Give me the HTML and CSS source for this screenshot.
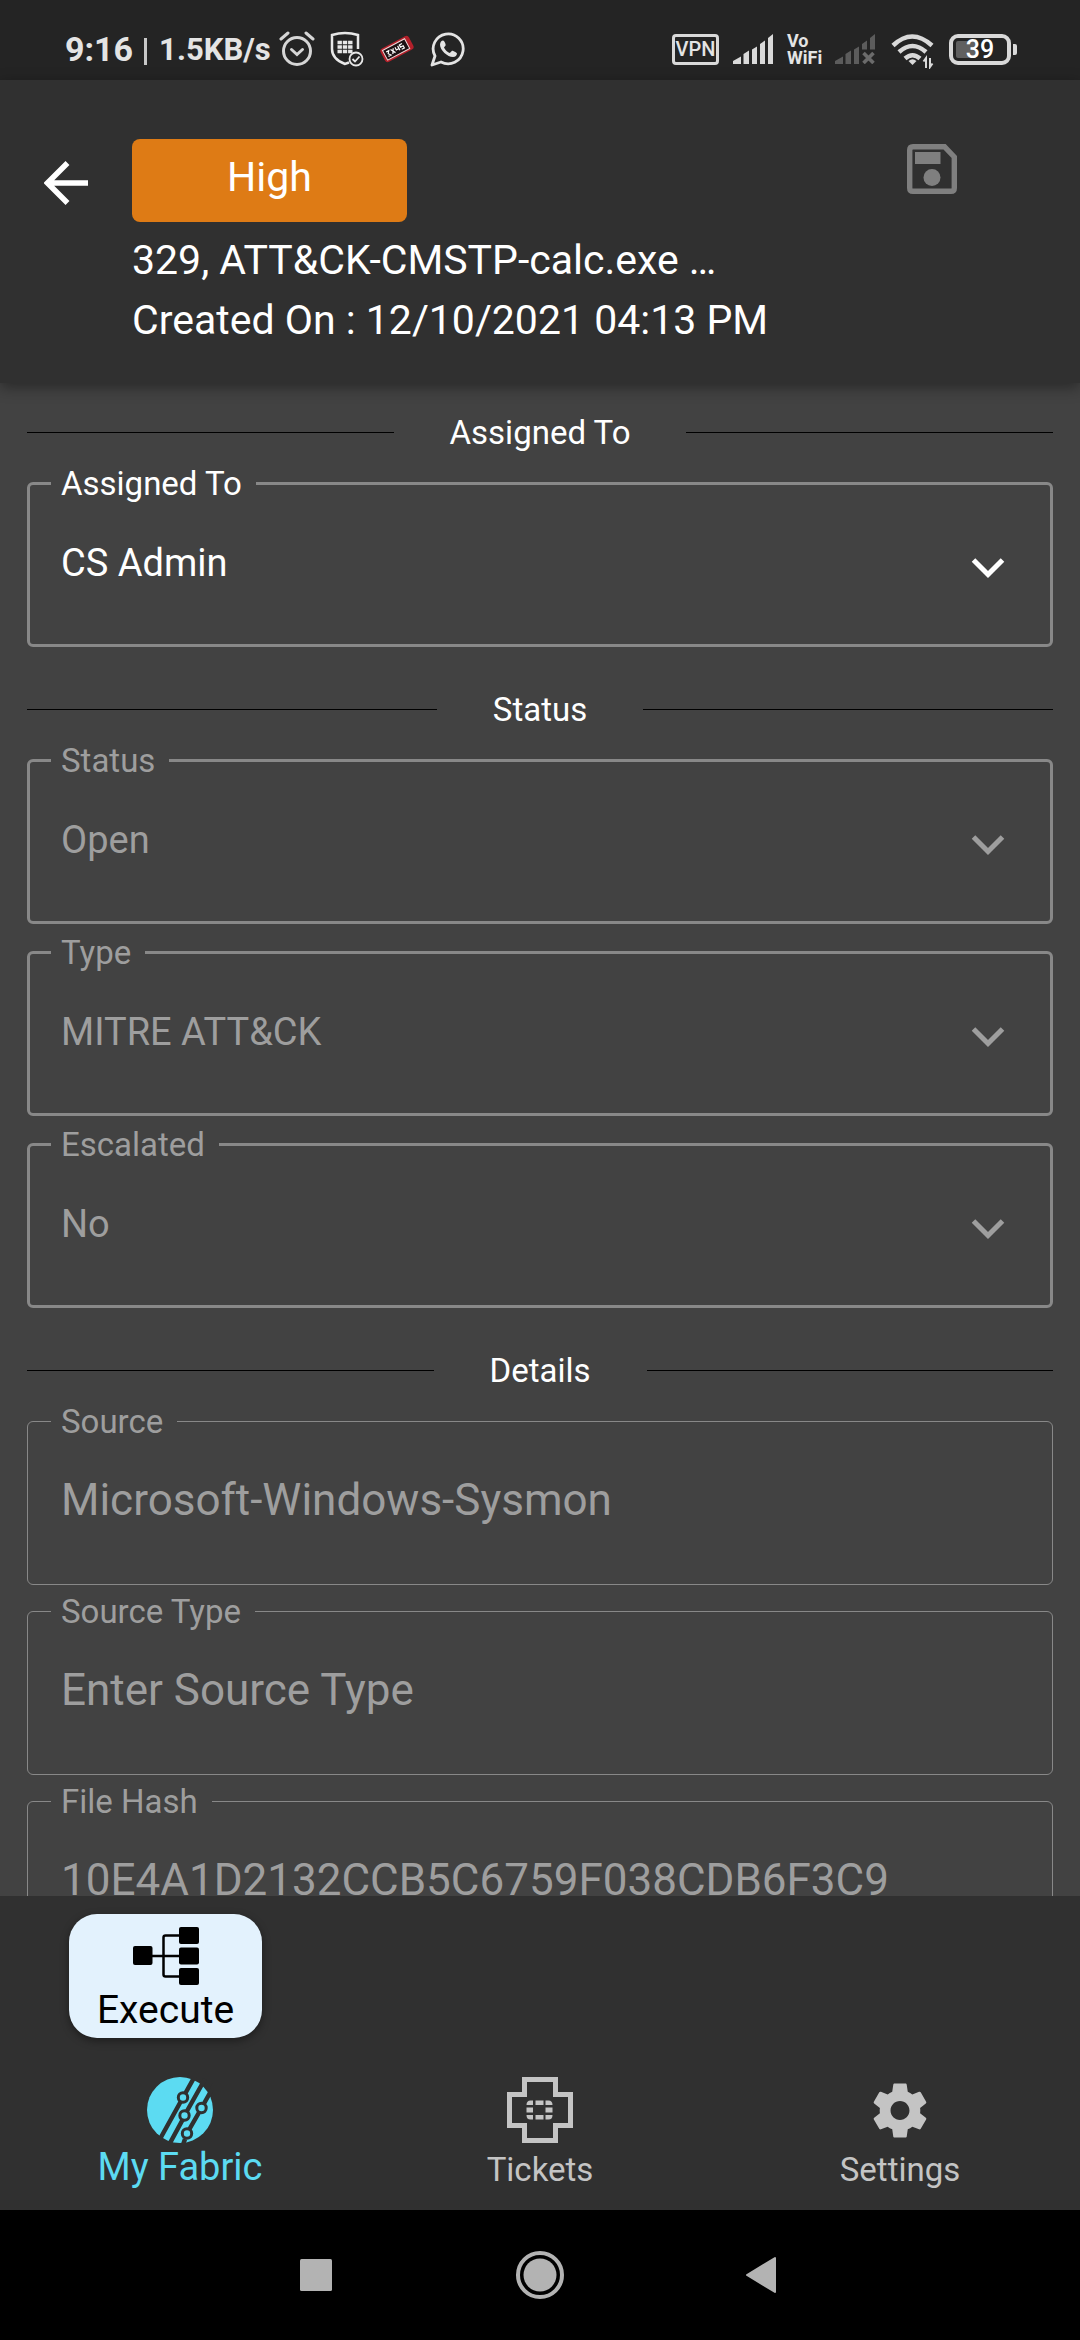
FILE: index.html
```html
<!DOCTYPE html>
<html lang="en">
<head>
<meta charset="utf-8">
<meta name="viewport" content="width=device-width, initial-scale=1">
<title>Ticket 329</title>
<link rel="stylesheet" href="styles.css">
</head>
<body>
<div class="status-bar">
  <div class="status-left">
    <span class="clock">9:16</span>
    <span class="bar"></span>
    <span class="speed">1.5KB/s</span>
    <svg class="i-alarm" width="36" height="36" viewBox="0 0 36 36" fill="none" stroke="#d6d6d6" stroke-width="3" stroke-linecap="round" aria-hidden="true"><circle cx="18" cy="20" r="13.5"/><path d="M12.500 18.500l5.500 5 5.500-5"/><path d="M2 8l7-6M34 8l-7-6"/></svg>
    <svg class="i-shield" width="34" height="36" viewBox="0 0 34 36" fill="none" stroke="#e8e8e8" stroke-width="2.500" aria-hidden="true"><path d="M28 18V4Q15 0 2 4v14q0 10 13 15l4-1.500"/><circle cx="26" cy="28" r="6.500" stroke-width="1.800"/><path d="M22.500 28l2.500 2.500 4.500-5" stroke-width="1.800"/><path d="M7.500 11.500h15M7.500 16h15M7.500 20.500h15" stroke-width="3.600" stroke-dasharray="4.400 .9"/></svg>
    <svg class="i-tag" width="34" height="30" viewBox="0 0 34 30" aria-hidden="true"><g transform="rotate(-28 17 15)"><rect x="1" y="7.500" width="32" height="15" rx="3" fill="#b3202a"/><rect x="3.500" y="9.500" width="25" height="11" fill="#1c1214" stroke="#f0d8d8" stroke-width="1"/><path d="M6 12.500h3l-2 2.500 2 2.500H6M11 12.500l3 5M14 12.500l-3 5M16 12.500v3h3M19 12.500v5M24 12.500h-3v2.500h3v2.500h-3" fill="none" stroke="#fff" stroke-width="1.200"/></g></svg>
    <svg class="i-wa" width="36" height="36" viewBox="0 0 36 36" aria-hidden="true"><path d="M2 34l3-9A15 15 0 1 1 11 31z" fill="none" stroke="#e4e4e4" stroke-width="2.800" stroke-linejoin="round"/><path d="M13 9.500c-1.200 0-3 1.500-3 4.200 0 5.500 7.500 12.300 13 12.300 2.500 0 4-1.700 4-3.500 0-.8-4.200-3-5-2.800l-2.200 2.300c-2-.6-4.800-3.200-5.800-5.500l1.700-2.300c.2-.8-1.400-4.700-2.700-4.700z" fill="#e4e4e4"/></svg>
  </div>
  <div class="status-right">
    <span class="vpn">VPN</span>
    <svg class="i-sig" width="40" height="30" viewBox="0 0 40 30" fill="#d9d9d9" aria-hidden="true"><path d="M0 30v-3l8-4.500V30zM10.500 30V20l5.500-3.500V30zM19 30V15.500l5-3V30zM27 30V10l5-3.500V30zM35 30V4l5-4v30z"/></svg>
    <span class="vowifi"><span>Vo</span><span>WiFi</span></span>
    <svg class="i-sig2" width="40" height="30" viewBox="0 0 40 30" fill="#5c5c5c" aria-hidden="true"><path d="M0 30v-3l8-4.500V30zM10.500 30V20l5.500-3.500V30zM19 30V15.500l5-3V30zM27 15.500V10l5-3.500v9zM35 15.500V4l5-4v15.500z"/><path d="M28.500 19l10 10M38.500 19l-10 10" stroke="#6b6b6b" stroke-width="3.600"/></svg>
    <svg class="i-wifi" width="44" height="36" viewBox="0 0 44 36" fill="none" stroke="#d9d9d9" stroke-width="4.500" aria-hidden="true"><path d="M2 12.500Q21-5.500 41 12.500M8 19q13.500-12 27 0M14 25.500q7.500-6.500 15 0"/><path d="M17.500 28q4-3.500 8 0l-4 4z" fill="#d9d9d9" stroke="none"/><path d="M35 35V25l-2.500 3.500M39 25v9l2.500-3.500" stroke-width="2"/></svg>
    <span class="battery"><span class="battery-body">39</span><span class="battery-nub"></span></span>
  </div>
</div>

<header class="header">
  <button class="icon-button back" type="button" aria-label="Back"><svg width="44" height="44" viewBox="0 0 44 44" fill="none" stroke="#fff" stroke-width="5.500" aria-hidden="true"><path d="M44 22H4.500M23.500 2L3.500 22l20 20"/></svg></button>
  <div class="summary">
    <button class="severity" type="button">High</button>
    <h1 class="title">329, ATT&amp;CK-CMSTP-calc.exe …</h1>
    <p class="title">Created On : 12/10/2021 04:13 PM</p>
  </div>
  <button class="icon-button save" type="button" aria-label="Save"><svg width="50" height="50" viewBox="0 0 50 50" aria-hidden="true"><path d="M6 2.700h31.500L47.300 13v31q0 3.300-3.300 3.300H6q-3.300 0-3.300-3.300V6q0-3.300 3.300-3.300z" fill="none" stroke="#7f7f7f" stroke-width="5.400"/><path d="M8 8h25.500v12H8z" fill="#7f7f7f"/><circle cx="25" cy="33.500" r="8.500" fill="#7f7f7f"/></svg></button>
</header>

<main class="content">
  <section>
    <h2 class="divider">Assigned To</h2>
    <div class="fields">
      <fieldset class="field active">
        <legend><label for="assigned">Assigned To</label></legend>
        <div class="control"><select id="assigned"><option>CS Admin</option></select><svg class="chevron" width="34" height="22" viewBox="0 0 34 22" aria-hidden="true"><path d="M2.500 3L17 17.500 31.500 3"/></svg></div>
      </fieldset>
    </div>
  </section>
  <section>
    <h2 class="divider">Status</h2>
    <div class="fields">
      <fieldset class="field">
        <legend><label for="status">Status</label></legend>
        <div class="control"><select id="status" disabled><option>Open</option></select><svg class="chevron" width="34" height="22" viewBox="0 0 34 22" aria-hidden="true"><path d="M2.500 3L17 17.500 31.500 3"/></svg></div>
      </fieldset>
      <fieldset class="field">
        <legend><label for="type">Type</label></legend>
        <div class="control"><select id="type" disabled><option>MITRE ATT&amp;CK</option></select><svg class="chevron" width="34" height="22" viewBox="0 0 34 22" aria-hidden="true"><path d="M2.500 3L17 17.500 31.500 3"/></svg></div>
      </fieldset>
      <fieldset class="field">
        <legend><label for="escalated">Escalated</label></legend>
        <div class="control"><select id="escalated" disabled><option>No</option></select><svg class="chevron" width="34" height="22" viewBox="0 0 34 22" aria-hidden="true"><path d="M2.500 3L17 17.500 31.500 3"/></svg></div>
      </fieldset>
    </div>
  </section>
  <section>
    <h2 class="divider">Details</h2>
    <div class="fields inputs">
      <fieldset class="field thin">
        <legend><label for="source">Source</label></legend>
        <div class="control"><input id="source" type="text" value="Microsoft-Windows-Sysmon" disabled></div>
      </fieldset>
      <fieldset class="field thin">
        <legend><label for="source-type">Source Type</label></legend>
        <div class="control"><input id="source-type" type="text" placeholder="Enter Source Type" disabled></div>
      </fieldset>
      <fieldset class="field thin">
        <legend><label for="hash">File Hash</label></legend>
        <div class="control"><input id="hash" type="text" value="10E4A1D2132CCB5C6759F038CDB6F3C9" disabled></div>
      </fieldset>
    </div>
  </section>
</main>

<div class="actions">
  <button class="execute" type="button">
    <svg width="66" height="58" viewBox="0 0 66 58" aria-hidden="true"><path d="M18 29h28M46 8.500H32.500q-2 0-2 2v37q0 2 2 2H46" fill="none" stroke="#000" stroke-width="2.500"/><rect y="19" width="19.500" height="19" rx="2"/><rect x="46" width="20" height="17" rx="2"/><rect x="46" y="20.500" width="20" height="17" rx="2"/><rect x="46" y="41" width="20" height="17" rx="2"/></svg>
    <span>Execute</span>
  </button>
</div>

<nav class="tabs">
  <a class="tab current" href="#fabric">
    <svg width="66" height="66" viewBox="0 0 66 66" aria-hidden="true"><circle cx="33" cy="33" r="33" fill="#5cdbf2"/><g fill="none" stroke="#303030" stroke-width="4.500"><path d="M13 62L33.500 25M38.500 16L48-1M23 66l12.500-23M40 34L58 2M36 68l2-6M42.500 52L52 35.500M57 26.500L68 7"/><g stroke-width="3"><circle cx="36" cy="20.500" r="4.700"/><circle cx="37.500" cy="38.500" r="4.700"/><circle cx="54.500" cy="31" r="4.700"/><circle cx="40" cy="56.500" r="4.700"/></g></g></svg>
    <span>My Fabric</span>
  </a>
  <a class="tab" href="#tickets">
    <svg width="66" height="66" viewBox="0 0 66 66" aria-hidden="true"><path d="M17.500 2.500h31v15H63.500v31H48.500v15h-31v-15h-15v-31h15z" fill="none" stroke="#c4c4c4" stroke-width="5"/><path d="M26 23.500v4.500h-6.500q0-4.500 4-4.500zM28.500 23.500h8V28h-8zM38.500 23.500h3q4 0 4 4.500h-7zM19.500 30.500H26v5h-6.500zM38.500 30.500h7v5h-7zM19.500 38H26v4.500h-2.500q-4 0-4-4.500zM28.500 38h8v4.500h-8zM38.500 38h7q0 4.500-4 4.500h-3z" fill="#c4c4c4"/></svg>
    <span>Tickets</span>
  </a>
  <a class="tab" href="#settings">
    <svg width="66" height="66" viewBox="-0.200 -0.400 24.400 24.400" fill="#c4c4c4" aria-hidden="true"><path d="M19.430 12.980c.04-.32.070-.640.070-.980s-.030-.660-.070-.980l2.110-1.650c.19-.15.240-.420.120-.640l-2-3.460c-.12-.22-.390-.300-.610-.220l-2.490 1c-.52-.4-1.080-.730-1.690-.980l-.380-2.650C14.460 2.180 14.250 2 14 2h-4c-.25 0-.460.180-.490.420l-.380 2.650c-.61.250-1.170.590-1.690.980l-2.490-1c-.23-.09-.490 0-.610.220l-2 3.460c-.13.220-.070.490.120.640l2.110 1.650c-.04.320-.070.650-.070.980s.030.660.070.980l-2.110 1.650c-.19.150-.240.420-.120.640l2 3.460c.12.220.390.300.610.220l2.490-1c.52.400 1.080.730 1.690.980l.380 2.650c.03.240.240.420.490.420h4c.25 0 .460-.180.490-.420l.380-2.650c.61-.25 1.170-.590 1.690-.980l2.490 1c.23.090.490 0 .610-.220l2-3.460c.12-.22.070-.490-.120-.640l-2.110-1.650zM12 15.500c-1.930 0-3.500-1.570-3.500-3.500s1.570-3.500 3.500-3.500 3.500 1.570 3.500 3.500-1.570 3.500-3.500 3.500z"/></svg>
    <span>Settings</span>
  </a>
</nav>

<div class="system-nav">
  <button class="icon-button" type="button" aria-label="Recent apps"><svg width="50" height="50" viewBox="0 0 50 50" aria-hidden="true"><rect x="9" y="9" width="32" height="32" rx="1.500" fill="#b3b3b3"/></svg></button>
  <button class="icon-button" type="button" aria-label="Home"><svg width="50" height="50" viewBox="0 0 50 50" aria-hidden="true"><circle cx="26" cy="25" r="22" fill="none" stroke="#b3b3b3" stroke-width="4"/><circle cx="26" cy="25" r="16.500" fill="#b3b3b3"/></svg></button>
  <button class="icon-button" type="button" aria-label="Back to previous screen"><svg width="50" height="50" viewBox="0 0 50 50" aria-hidden="true"><path d="M11 25L39 8v34z" fill="#b3b3b3" stroke="#b3b3b3" stroke-width="2" stroke-linejoin="round"/></svg></button>
</div>
</body>
</html>
```

FILE: styles.css
```css
* {
  box-sizing: border-box;
}

body {
  display: flex;
  flex-direction: column;
  height: 100vh;
  margin: 0;
  background: #424242;
  color: #fff;
  font-family: Roboto, "Noto Sans", sans-serif;
  font-size: 33px;
  line-height: 39px;
}

svg {
  display: block;
  flex: none;
}

button,
input,
select {
  margin: 0;
  border: 0;
  padding: 0;
  background: none;
  color: inherit;
  font-family: inherit;
}

/* System status bar */
.status-bar {
  display: flex;
  justify-content: space-between;
  flex: none;
  height: 80px;
  padding: 20px 63px 0 65px;
  background: #242424;
  color: #e4e4e4;
}

.status-left,
.status-right {
  display: flex;
  align-items: center;
  height: 60px;
  padding-bottom: 2px;
}

.clock {
  font-size: 34px;
  font-weight: 700;
}

.bar {
  width: 3px;
  height: 27px;
  margin: 4px 12px 0 11px;
  background: #c8c8c8;
}

.speed {
  font-size: 31px;
  font-weight: 700;
}

.i-alarm {
  margin-left: 8px;
}

.i-shield {
  margin-left: 15px;
}

.i-tag {
  margin-left: 16px;
}

.i-wa {
  margin-left: 16px;
}

.vpn {
  width: 47px;
  height: 31px;
  border: 3px solid #d9d9d9;
  border-radius: 4px;
  font-size: 20px;
  font-weight: 500;
  line-height: 25px;
  text-align: center;
}

.i-sig {
  margin-left: 14px;
}

.vowifi {
  display: flex;
  flex-direction: column;
  width: 36px;
  margin-left: 14px;
  font-size: 18px;
  font-weight: 700;
  line-height: 17px;
}

.i-sig2 {
  margin-left: 12px;
}

.i-wifi {
  margin: 4px 0 0 16px;
}

.battery {
  display: flex;
  align-items: center;
  gap: 2px;
  margin-left: 14px;
}

.battery-body {
  width: 62px;
  height: 31px;
  border: 4px solid #d9d9d9;
  border-radius: 9px;
  background: linear-gradient(90deg, #606060 20px, #242424 20px) content-box;
  padding: 3px;
  color: #fff;
  font-size: 25px;
  font-weight: 500;
  line-height: 18px;
  text-align: center;
}

.battery-nub {
  width: 4px;
  height: 11px;
  border-radius: 0 2px 2px 0;
  background: #d9d9d9;
}

/* Ticket header */
.header {
  position: relative;
  display: flex;
  align-items: flex-start;
  flex: none;
  padding: 59px 123px 33px 44px;
  background: #303030;
  box-shadow: 0 4px 14px rgba(0, 0, 0, 0.4);
}

.icon-button {
  flex: none;
  cursor: pointer;
}

.back {
  margin-top: 22px;
}

.save {
  margin-top: 5px;
}

.summary {
  flex: 1;
  min-width: 0;
  margin-left: 44px;
}

.severity {
  display: block;
  width: 275px;
  margin-bottom: 8px;
  border-radius: 8px;
  padding: 8px 0 15px;
  background: #de7b15;
  font-size: 41px;
  line-height: 60px;
}

.title {
  margin: 0;
  font-size: 41px;
  font-weight: 400;
  line-height: 60px;
  white-space: nowrap;
}

/* Scrolling form */
.content {
  display: flex;
  flex: 1;
  flex-direction: column;
  gap: 43px;
  min-height: 0;
  overflow-y: auto;
  padding: 30px 27px 0;
  scrollbar-width: none;
}

.divider {
  display: flex;
  align-items: center;
  gap: 56px;
  margin: 0 0 12px;
  font-size: 33px;
  font-weight: 400;
}

.divider::before,
.divider::after {
  flex: 1;
  height: 1px;
  background: #000;
  content: "";
}

.fields {
  display: flex;
  flex-direction: column;
  gap: 9px;
}

.inputs {
  gap: 7px;
}

.field {
  min-width: 0;
  margin: 0;
  border: 3px solid #888;
  border-radius: 6px;
  padding: 0 21px 23px;
  color: #9e9e9e;
}

.active {
  color: #fff;
}

.thin {
  border-width: 1px;
  padding: 0 23px 25px;
}

.field legend {
  padding: 0 14px 0 10px;
}

.control {
  display: grid;
  align-items: center;
}

.control > * {
  grid-area: 1 / 1;
}

.control select,
.control input {
  width: 100%;
  height: 118px;
  padding: 0 10px;
  appearance: none;
  opacity: 1;
  outline: none;
}

.control select {
  padding-top: 2px;
  font-size: 38px;
}

.control input {
  font-size: 44px;
}

.control input::placeholder {
  color: inherit;
  opacity: 1;
}

.chevron {
  justify-self: end;
  margin: 11px 24px 0 0;
  fill: none;
  pointer-events: none;
  stroke: currentColor;
  stroke-width: 5px;
}

/* Ticket actions */
.actions {
  display: flex;
  flex: none;
  padding: 18px 69px 16px;
  background: #303030;
}

.execute {
  display: flex;
  align-items: center;
  flex-direction: column;
  gap: 5px;
  width: 193px;
  border-radius: 28px;
  padding: 13px 0 7px;
  background: #e3f2fd;
  box-shadow: 0 3px 8px rgba(0, 0, 0, 0.4);
  color: #000;
  font-size: 39px;
  line-height: 41px;
}

/* App tabs */
.tabs {
  display: flex;
  flex: none;
  background: #303030;
}

.tab {
  display: flex;
  align-items: center;
  flex: 1;
  flex-direction: column;
  gap: 7px;
  padding: 23px 0 21px;
  color: #c4c4c4;
  text-decoration: none;
}

.current {
  gap: 5px;
  padding-bottom: 20px;
  color: #5cdbf2;
  font-size: 38px;
}

/* System navigation */
.system-nav {
  display: flex;
  align-items: center;
  justify-content: space-between;
  flex: none;
  height: 130px;
  padding: 0 294px 0 291px;
  background: #000;
}
```
